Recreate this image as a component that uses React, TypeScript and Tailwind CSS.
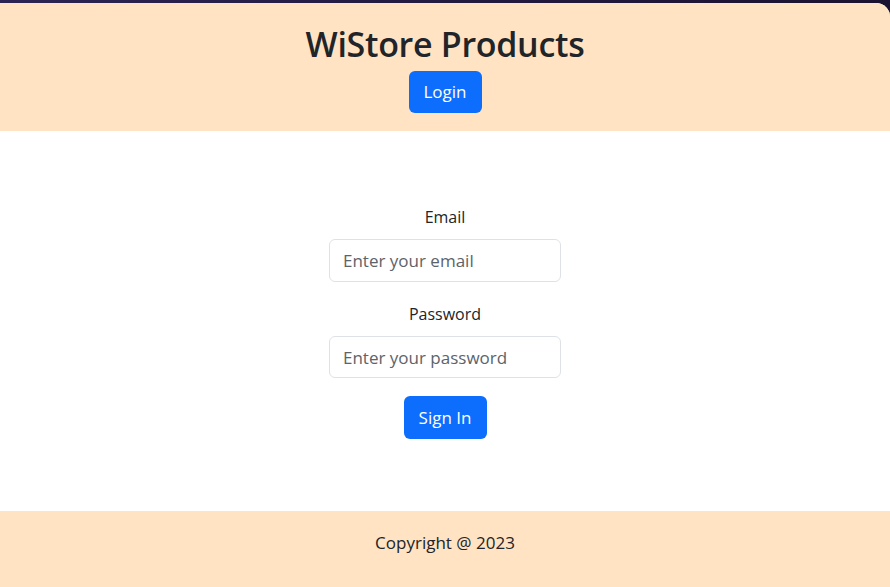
export default function App() {
  return (
    <div
      className="min-h-[587px] bg-gradient-to-r from-[#2c2452] to-[#1b1130] pt-[3px] text-[#212529]"
      style={{ fontFamily: '"Open Sans", "Noto Sans", sans-serif' }}
    >
      <div className="flex min-h-[584px] flex-col overflow-hidden rounded-tr-[14px] bg-white">
        <header className="flex flex-col items-center bg-[#ffe3c3] pb-[18px] pt-[20px]">
          <h1 className="mb-[6px] text-[34px] font-semibold leading-[42px] tracking-[-0.3px]">
            WiStore Products
          </h1>
          <button className="h-[42px] w-[73px] rounded-[6px] bg-[#0d6efd] text-[17px] text-white">
            Login
          </button>
        </header>

        <main className="flex flex-col items-center pb-[72px] pt-[73px]">
          <label className="mb-[8px] text-[16px] leading-[27px]">Email</label>
          <input
            type="email"
            placeholder="Enter your email"
            className="h-[43px] w-[232px] rounded-[6px] border border-[#dee2e6] px-[13px] text-[17px] placeholder:text-[#5c636a] outline-none"
          />
          <label className="mb-[8px] mt-[19px] text-[16px] leading-[27px]">Password</label>
          <input
            type="password"
            placeholder="Enter your password"
            className="h-[42px] w-[232px] rounded-[6px] border border-[#dee2e6] px-[13px] text-[17px] placeholder:text-[#5c636a] outline-none"
          />
          <button className="mt-[18px] h-[43px] w-[83px] rounded-[6px] bg-[#0d6efd] text-[17px] text-white">
            Sign In
          </button>
        </main>

        <footer className="flex flex-1 items-center justify-center bg-[#ffe3c3] pb-[12px]">
          <p className="text-[17px]">Copyright @ 2023</p>
        </footer>
      </div>
    </div>
  );
}
